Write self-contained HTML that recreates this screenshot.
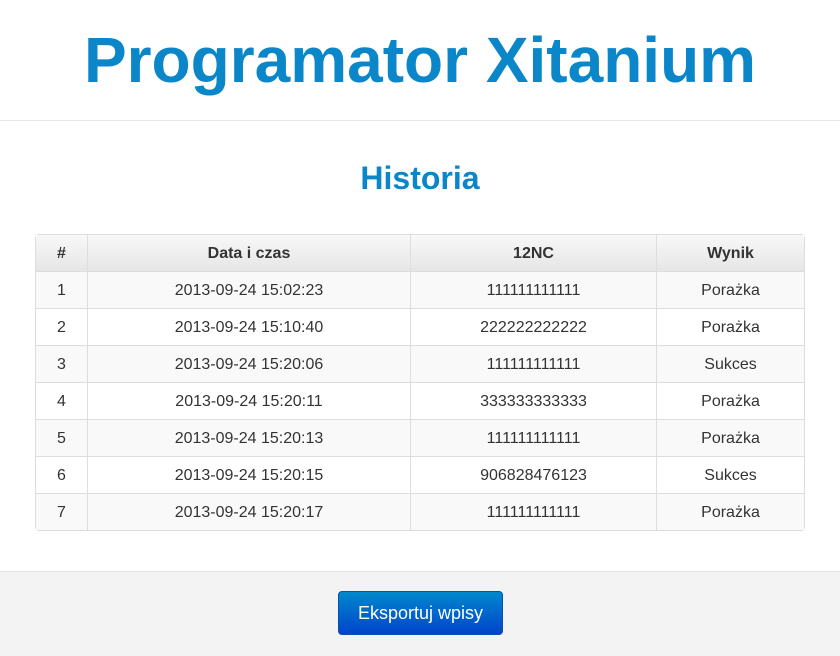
<!DOCTYPE html>
<html><head><style>
body{margin:0;width:840px;height:655px;background:#fff;font-family:"Liberation Sans",sans-serif;overflow:hidden;position:relative}
h1{position:absolute;top:0;left:0;width:840px;height:120px;margin:0;border-bottom:1px solid #e8e8e8;text-align:center;line-height:120px;font-size:64px;color:#0a86c9;font-weight:bold}
h2{position:absolute;top:158px;left:0;width:840px;margin:0;text-align:center;font-size:32px;line-height:40px;color:#0a86c9;font-weight:bold}
table{position:absolute;top:234px;left:35px;width:770px;border-collapse:separate;border-spacing:0;border:1px solid #ddd;border-radius:4px;font-size:16px;color:#333}
td,th{height:36px;padding:2px 0 0;box-sizing:border-box;text-align:center;border-left:1px solid #ddd;border-top:1px solid #ddd}
tbody td{height:37px}
thead th{height:36px}
tr>*:first-child{border-left:none}
thead th{border-top:none;background:linear-gradient(#f8f8f8,#e6e6e6);font-weight:bold}
tbody tr:nth-child(odd) td{background:#f9f9f9}
.foot{position:absolute;top:571px;left:0;width:840px;height:84px;background:#f3f3f3;border-top:1px solid #e2e2e2}
.btn{position:absolute;left:338px;top:19px;width:165px;height:44px;border-radius:4px;background:linear-gradient(#0088cc,#0044cc);color:#fff;font-size:18px;line-height:42px;text-align:center;box-sizing:border-box;border:1px solid #0a4fb0}
</style></head><body>
<h1>Programator Xitanium</h1>
<h2>Historia</h2>
<table>
<colgroup><col style="width:51px"><col style="width:323px"><col style="width:246px"><col></colgroup>
<thead><tr><th>#</th><th>Data i czas</th><th>12NC</th><th>Wynik</th></tr></thead>
<tbody>
<tr><td>1</td><td>2013-09-24 15:02:23</td><td>111111111111</td><td>Porażka</td></tr>
<tr><td>2</td><td>2013-09-24 15:10:40</td><td>222222222222</td><td>Porażka</td></tr>
<tr><td>3</td><td>2013-09-24 15:20:06</td><td>111111111111</td><td>Sukces</td></tr>
<tr><td>4</td><td>2013-09-24 15:20:11</td><td>333333333333</td><td>Porażka</td></tr>
<tr><td>5</td><td>2013-09-24 15:20:13</td><td>111111111111</td><td>Porażka</td></tr>
<tr><td>6</td><td>2013-09-24 15:20:15</td><td>906828476123</td><td>Sukces</td></tr>
<tr><td>7</td><td>2013-09-24 15:20:17</td><td>111111111111</td><td>Porażka</td></tr>
</tbody></table>
<div class="foot"><div class="btn">Eksportuj wpisy</div></div>
</body></html>
